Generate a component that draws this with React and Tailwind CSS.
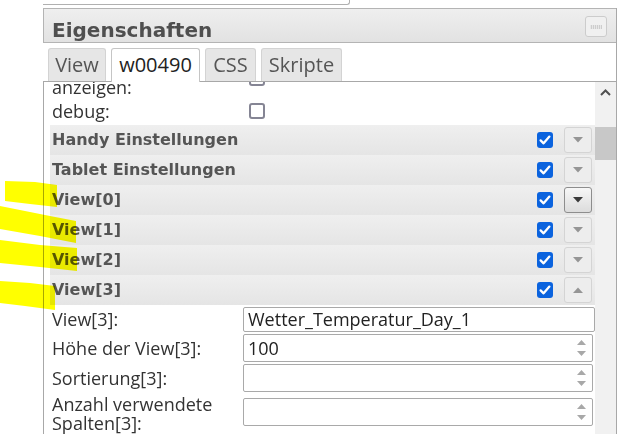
import React from "react";

function BlueCheck() {
  return (
    <div className="w-[16px] h-[16px] rounded-[3px] bg-[#0b63de] flex items-center justify-center shrink-0">
      <svg width="16" height="16" viewBox="0 0 16 16">
        <path d="M3.6 8.4 L6.6 11.3 L12.4 4.6" fill="none" stroke="#ffffff" strokeWidth="2.3" strokeLinecap="round" strokeLinejoin="round" />
      </svg>
    </div>
  );
}

function EmptyCheck() {
  return <div className="w-[16px] h-[16px] rounded-[3px] border-2 border-[#858594] bg-white shrink-0" />;
}

function DropBtn({ active, up }) {
  const cls = active
    ? "border-[#8d8d8d] bg-gradient-to-b from-[#f7f7f7] to-[#dcdcdc]"
    : "border-[#d4d4d4] bg-[#ededed]";
  const fill = active ? "#3a3a3a" : "#959595";
  return (
    <div className={"w-[28px] h-[26px] rounded-[3px] border flex items-center justify-center shrink-0 " + cls}>
      <svg width="10" height="6" viewBox="0 0 10 6">
        {up ? <polygon points="0,6 10,6 5,0.5" fill={fill} /> : <polygon points="0,0 10,0 5,5.5" fill={fill} />}
      </svg>
    </div>
  );
}

function GroupRow({ label, active, up }) {
  return (
    <div className="h-[30px] flex items-center bg-gradient-to-b from-[#efefef] to-[#e5e5e5]">
      <div className="flex-1 pl-[2px] font-['DejaVu_Sans',sans-serif] font-bold text-[16px] leading-[20px] text-[#555555]">{label}</div>
      <BlueCheck />
      <div className="w-[11px]" />
      <DropBtn active={active} up={up} />
      <div className="w-[3px]" />
    </div>
  );
}

function Spinner() {
  return (
    <div className="w-[18px] h-full flex flex-col items-center justify-center gap-[6px] mr-[2px]">
      <svg width="9" height="5" viewBox="0 0 9 5"><polygon points="0,5 9,5 4.5,0" fill="#a8a8a8" /></svg>
      <svg width="9" height="5" viewBox="0 0 9 5"><polygon points="0,0 9,0 4.5,5" fill="#a8a8a8" /></svg>
    </div>
  );
}

function InputRow({ label, h, value, spin, inputH, full, labelPad }) {
  return (
    <div className={"flex items-center " + h}>
      <div className={"w-[193px] shrink-0 pl-[2px] text-[18px] leading-[19px] text-[#333333] " + (labelPad || "")}>{label}</div>
      <div
        className={
          "flex items-center border border-[#a9a9a9] rounded-[2px] bg-white " +
          inputH +
          (full ? " flex-1" : " w-[350px]")
        }
      >
        <div className="flex-1 pl-[4px] text-[18px] leading-[20px] text-[#222222]">{value}</div>
        {spin ? <Spinner /> : null}
      </div>
    </div>
  );
}

export default function App() {
  return (
    <div className="relative w-[618px] h-[434px] bg-white overflow-hidden font-['Open_Sans',sans-serif]">
      <div className="ml-[43px] w-[307px] h-[5px] border-b border-r border-[#b0b0b0] rounded-br-[3px]" />
      <div className="ml-[43px] mt-[3px] w-[574px] h-[426px] flex flex-col border-r border-[#a8a8a8]">
        {/* header */}
        <div className="flex items-start justify-between border-t border-l border-b border-[#b4b4b4] bg-gradient-to-b from-[#efefef] to-[#e2e2e2]">
          <div className="pt-[9px] pl-[8px] font-['DejaVu_Sans',sans-serif] font-bold text-[20px] leading-[24px] text-[#4f4f4f]">
            Eigenschaften
          </div>
          <div className="mt-[7px] mr-[9px] w-[22px] h-[21px] rounded-[3px] border border-[#cccccc] bg-[#f0f0f0] flex items-center justify-center">
            <svg width="12" height="4" viewBox="0 0 12 4">
              {[0.8, 2.8, 4.8, 6.8, 8.8, 10.8].map((x) => (
                <React.Fragment key={x}>
                  <rect x={x} y="0.5" width="1" height="1" fill="#9a9a9a" />
                  <rect x={x} y="2.5" width="1" height="1" fill="#9a9a9a" />
                </React.Fragment>
              ))}
            </svg>
          </div>
        </div>
        {/* tabs */}
        <div className="flex items-end gap-[5px] pl-[5px] pt-[5px] bg-white">
          <div className="w-[58px] h-[33px] flex items-center justify-center rounded-t-[3px] border-t border-l border-r border-[#d3d3d3] bg-[#e6e6e6] text-[20px] text-[#555555]">View</div>
          <div className="relative z-10 w-[89px] h-[34px] -mb-[1px] flex items-center justify-center rounded-t-[3px] border-t border-l border-r border-[#c5c5c5] bg-white text-[20px] text-[#222222] pb-[1px]">w00490</div>
          <div className="w-[51px] h-[33px] flex items-center justify-center rounded-t-[3px] border-t border-l border-r border-[#d3d3d3] bg-[#e6e6e6] text-[20px] text-[#555555]">CSS</div>
          <div className="w-[81px] h-[33px] flex items-center justify-center rounded-t-[3px] border-t border-l border-r border-[#d3d3d3] bg-[#e6e6e6] text-[20px] text-[#555555]">Skripte</div>
        </div>
        {/* content */}
        <div className="flex-1 flex border-t border-l border-[#a8a8a8] min-h-0">
          <div className="flex-1 overflow-hidden pl-[6px]">
            <div className="-mt-[23px] flex flex-col">
              <div className="h-[38px] flex items-center">
                <div className="w-[193px] shrink-0 pl-[2px] pt-[19px] text-[18px] leading-[19px] text-[#333333]">
                  anzeigen:
                </div>
                <div className="ml-[6px]"><EmptyCheck /></div>
              </div>
              <div className="h-[28px] flex items-center">
                <div className="w-[193px] shrink-0 pl-[2px] text-[18px] leading-[19px] text-[#333333]">debug:</div>
                <div className="ml-[6px]"><EmptyCheck /></div>
              </div>
              <GroupRow label="Handy Einstellungen" />
              <GroupRow label="Tablet Einstellungen" />
              <GroupRow label="View[0]" active />
              <GroupRow label="View[1]" />
              <GroupRow label="View[2]" />
              <GroupRow label="View[3]" up />
              <InputRow label="View[3]:" h="h-[28px]" inputH="h-[25px]" value="Wetter_Temperatur_Day_1" full />
              <InputRow label="Höhe der View[3]:" h="h-[30px]" inputH="h-[28px]" value="100" spin />
              <InputRow label="Sortierung[3]:" h="h-[30px]" inputH="h-[28px]" value="" spin />
              <InputRow label={<>Anzahl verwendete<br />Spalten[3]:</>} h="h-[38px]" inputH="h-[28px]" value="" spin labelPad="pt-[4px]" />
            </div>
          </div>
          <div className="w-[21px] bg-[#f1f1f1] flex flex-col">
            <div className="h-[20px] flex items-center justify-center">
              <svg width="11" height="7" viewBox="0 0 11 7">
                <path d="M1 6 L5.5 1.5 L10 6" fill="none" stroke="#505050" strokeWidth="2" />
              </svg>
            </div>
            <div className="mt-[25px] h-[33px] bg-[#c8c8c8]" />
          </div>
        </div>
      </div>
      {/* yellow highlighter marks */}
      <svg className="absolute left-0 top-0 pointer-events-none mix-blend-multiply" width="618" height="434" viewBox="0 0 618 434">
        <polygon points="5,181 35,182 57,185 57,207 30,204 5,201" fill="#ffff00" />
        <polygon points="0,206 50,216 76,221 76,243 40,236 0,229" fill="#ffff00" />
        <polygon points="0,240 40,245 77,248 77,271 40,267 0,263" fill="#ffff00" />
        <polygon points="0,281 30,283 55,286 55,310 25,306 0,303" fill="#ffff00" />
      </svg>
    </div>
  );
}
